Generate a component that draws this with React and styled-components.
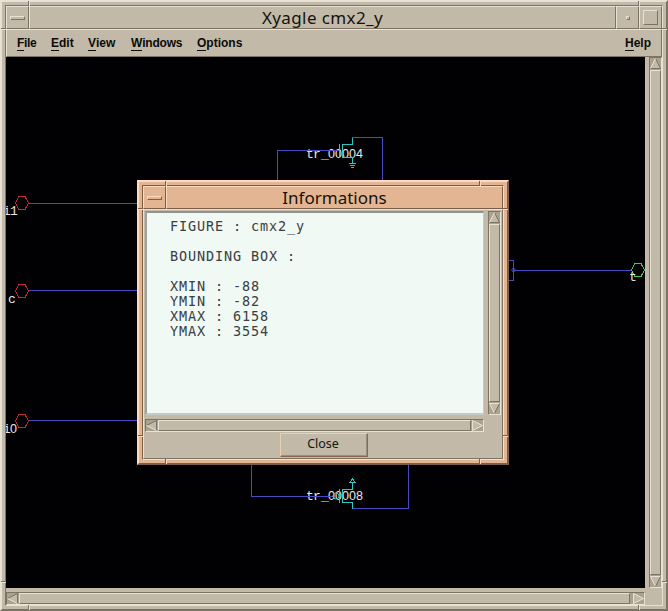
import React from "react";
import styled, { createGlobalStyle, css } from "styled-components";

const C = {
  base: "#c2b9a8", light: "#e8e2d6", dark: "#7b7464", trough: "#aaa18f",
  orange: "#e4b592", orangeLight: "#fbdcc2", orangeDark: "#7e5d48",
  wire: "#4a4ac0", cyan: "#32c3c3", red: "#c0263a", green: "#4ac84a",
};

const GlobalStyle = createGlobalStyle`
  * { box-sizing: border-box; }
  body { margin: 0; background: #000; overflow: hidden; }
`;

const tones = {
  beige: [C.base, C.light, C.dark],
  orange: [C.orange, C.orangeLight, C.orangeDark],
};

const raised = css`
  background: ${(p) => tones[p.$tone || "beige"][0]};
  border: 1px solid;
  border-color: ${(p) => {
    const [, l, d] = tones[p.$tone || "beige"];
    return `${l} ${d} ${d} ${l}`;
  }};
`;

const Frame = styled.div`
  ${raised}
  position: relative;
  border-width: 2px;
  padding: 3px;
  width: ${(p) => p.$w}px;
  height: ${(p) => p.$h}px;
`;

const Inner = styled.div`
  display: flex;
  flex-direction: column;
  height: 100%;
  border: 1px solid;
  border-color: ${(p) => {
    const [, l, d] = tones[p.$tone || "beige"];
    return `${d} ${l} ${l} ${d}`;
  }};
`;

const Handles = styled.svg`
  position: absolute;
  left: -2px;
  top: -2px;
  pointer-events: none;
`;

const TitleBar = styled.div`
  display: flex;
  flex: none;
  height: 23px;
`;

const TitleButton = styled.div`
  ${raised}
  width: 23px;
  display: flex;
  align-items: center;
  justify-content: center;
`;

const Glyph = styled.span`
  ${raised}
  width: ${(p) => p.$w}px;
  height: ${(p) => p.$h}px;
`;

const Title = styled.div`
  ${raised}
  flex: 1;
  text-align: center;
  font: 17px/21px "Noto Sans", "Open Sans", sans-serif;
  letter-spacing: ${(p) => p.$spacing || 0}px;
  color: #15120c;
  white-space: nowrap;
`;

const MenuBar = styled.div`
  ${raised}
  display: flex;
  flex: none;
  height: 28px;
  padding: 5px 10px 0 10px;
  font: bold 12px/16px "Liberation Sans", Arial, sans-serif;
  color: #0c0b08;
`;

const MenuItem = styled.div`
  width: ${(p) => p.$w}px;
  letter-spacing: ${(p) => p.$spacing || 0}px;
  white-space: nowrap;
  margin-left: ${(p) => (p.$end ? "auto" : "0")};
`;

const Mnemonic = styled.span`
  display: inline-block;
  height: 16px;
  border-bottom: 1px solid #0c0b08;
`;

const Body = styled.div`
  display: grid;
  grid-template-columns: 639px 13px;
  grid-template-rows: 531px 13px;
  gap: 4px;
  height: 548px;
  background: ${C.base};
`;

const Canvas = styled.svg`
  display: block;
  background: #010103;
`;

const ScrollBox = styled.div`
  display: flex;
  flex-direction: ${(p) => (p.$vertical ? "column" : "row")};
  width: ${(p) => (p.$vertical ? "13px" : "100%")};
  height: ${(p) => (p.$vertical ? "100%" : "13px")};
  background: ${C.trough};
  border: 1px solid;
  border-color: ${C.dark} ${C.light} ${C.light} ${C.dark};
`;

const Thumb = styled.div`
  ${raised}
  flex: 1;
  margin: ${(p) => (p.$vertical ? `1px 0 ${p.$rest}px` : `0 ${p.$rest}px 0 1px`)};
`;

const Arrow = styled.svg`
  display: block;
  flex: none;
  transform: rotate(${(p) => p.$turn}deg);
`;

const Desktop = styled.div`
  position: relative;
  width: 668px;
  height: 611px;
`;

const Dialog = styled.div`
  position: absolute;
  left: 137px;
  top: 180px;
`;

const DialogBody = styled.div`
  ${raised}
  flex: 1;
  padding: 1px 0 0 1px;
`;

const Panes = styled.div`
  display: grid;
  grid-template-columns: 339px 13px;
  grid-template-rows: 204px 13px;
  gap: 4px;
`;

const TextPane = styled.pre`
  margin: 0;
  padding: 6px 0 0 23px;
  background: #f0f9f4;
  border: solid;
  border-width: 2px 1px 2px 2px;
  border-color: #8f958e #c5cbc6 #c5cbc6 #9da29c;
  font: 13.5px/15px "DejaVu Sans Mono", monospace;
  letter-spacing: 0.873px;
  color: #3a4042;
`;

const CloseButton = styled.button`
  display: block;
  margin: 1px 0 0 135px;
  padding: 0 2px 2px 0;
  width: 88px;
  height: 24px;
  background: ${C.base};
  border: 1px solid;
  border-color: #efcdb2 #8a684f #8a684f #efcdb2;
  box-shadow: inset -1px -1px #988f7e;
  font: 12.5px/18px "Noto Sans", sans-serif;
  color: #17150f;
`;

function ArrowIcon({ turn }) {
  return (
    <Arrow width="11" height="11" viewBox="0 0 11 11" $turn={turn}>
      <path d="M5.5 0.5L10.5 10.5H0.5Z" fill={C.base} />
      <path d="M5.5 0.5L10.5 10.5H0.5" stroke={turn >= 90 && turn <= 180 ? C.light : C.dark} fill="none" />
      <path d="M5.5 0.5L0.5 10.5" stroke={turn === 180 ? C.dark : C.light} fill="none" />
    </Arrow>
  );
}

function ScrollBar({ vertical, rest = 1 }) {
  return (
    <ScrollBox $vertical={vertical}>
      <ArrowIcon turn={vertical ? 0 : 270} />
      <Thumb $vertical={vertical} $rest={rest} />
      <ArrowIcon turn={vertical ? 180 : 90} />
    </ScrollBox>
  );
}

function FrameHandles({ w, h, tone = "beige", right, low }) {
  const [, l, d] = tones[tone];
  const lines = (color, o) => (
    <path
      stroke={color}
      d={`M${28.5 + o} 1V6M${right + o + 0.5} 1V6M${28.5 + o} ${h - 6}V${h - 1}M${right + o + 0.5} ${h - 6}V${h - 1}
      M1 ${28.5 + o}H6M${w - 6} ${28.5 + o}H${w - 1}M1 ${low + o + 0.5}H6M${w - 6} ${low + o + 0.5}H${w - 1}`}
    />
  );
  return (
    <Handles width={w} height={h} shapeRendering="crispEdges">
      {lines(d, 0)}
      {lines(l, 1)}
    </Handles>
  );
}

const Label = styled.text`
  font: 13px "Liberation Mono", monospace;
  fill: #e6e6e6;
`;
const Digit = styled.tspan`
  font: 12.5px "Liberation Sans", sans-serif;
`;

function DeviceLabel({ y, last }) {
  return (
    <Label y={y}>
      <tspan x="306 313 321">tr_</tspan>
      <Digit x="328 335 342 349 356">{"0000" + last}</Digit>
    </Label>
  );
}

function Pin({ x, y, color }) {
  return (
    <path
      stroke={color}
      shapeRendering="crispEdges"
      d={`M${x - 6.5} ${y}L${x - 3} ${y - 6.5}H${x + 3}L${x + 6.5} ${y}L${x + 3} ${y + 6.5}H${x - 3}Z`}
    />
  );
}

function Schematic() {
  return (
    <Canvas width="639" height="531" viewBox="6 57 639 531" fill="none">
      <DeviceLabel y="158" last="4" />
      <DeviceLabel y="500" last="8" />
      <g stroke={C.wire} shapeRendering="crispEdges">
        <path d="M29 203.5H140M29 290.5H140M29 420.5H140" />
        <path d="M277.5 182V150.5H339M352 137.5H382.5V182" />
        <path d="M251.5 463V496.5H333M352 508.5H408.5V463" />
        <path d="M507 260.5H513.5V280.5H507M514 270.5H631" />
      </g>
      <circle cx="513.5" cy="270" r="1.7" stroke={C.wire} />
      <g stroke={C.cyan} shapeRendering="crispEdges">
        <path d="M339.5 144V158M352.5 138V144.5H342.5V157.5H352.5V163M349 163.5H356M350 165.5H355M351 167.5H354" />
        <path d="M339.5 489V503M352.5 483V489.5H342.5V502.5H352.5V509M349 482.5H356M349.5 482.5L352.5 479L355.5 482.5" />
      </g>
      <circle cx="336" cy="496" r="3" stroke={C.cyan} />
      <Pin x={22} y={203} color={C.red} />
      <Pin x={22} y={291} color={C.red} />
      <Pin x={22} y={421} color={C.red} />
      <Pin x={638} y={270} color={C.green} />
      <Label x="3" y="215">i<tspan x="10">1</tspan></Label>
      <Label x="8" y="303">c</Label>
      <Label x="3" y="433">i<Digit x="10">0</Digit></Label>
      <Label x="629" y="281">t</Label>
    </Canvas>
  );
}

const MENUS = [
  ["File", 34, -0.3], ["Edit", 37, 0], ["View", 43, 0], ["Windows", 66, -0.2], ["Options", 60, 0],
];

const INFO = `FIGURE : cmx2_y

BOUNDING BOX :

XMIN : -88
YMIN : -82
XMAX : 6158
YMAX : 3554`;

export default function App() {
  return (
    <Desktop>
      <GlobalStyle />
      <Frame $w={668} $h={611}>
        <Inner>
          <TitleBar>
            <TitleButton><Glyph $w={15} $h={4} /></TitleButton>
            <Title $spacing={0.4}>Xyagle cmx2_y</Title>
            <TitleButton><Glyph $w={4} $h={4} /></TitleButton>
            <TitleButton><Glyph $w={15} $h={15} /></TitleButton>
          </TitleBar>
          <MenuBar>
            {MENUS.map(([name, w, s]) => (
              <MenuItem key={name} $w={w} $spacing={s}>
                <Mnemonic>{name[0]}</Mnemonic>{name.slice(1)}
              </MenuItem>
            ))}
            <MenuItem $end><Mnemonic>H</Mnemonic>elp</MenuItem>
          </MenuBar>
          <Body>
            <Schematic />
            <ScrollBar vertical />
            <ScrollBar rest={3} />
          </Body>
        </Inner>
        <FrameHandles w={668} h={611} right={638} low={581} />
      </Frame>
      <Dialog>
        <Frame $tone="orange" $w={372} $h={285}>
          <Inner $tone="orange">
            <TitleBar>
              <TitleButton $tone="orange"><Glyph $tone="orange" $w={15} $h={4} /></TitleButton>
              <Title $tone="orange">Informations</Title>
            </TitleBar>
            <DialogBody>
              <Panes>
                <TextPane>{INFO}</TextPane>
                <ScrollBar vertical />
                <ScrollBar />
              </Panes>
              <CloseButton>Close</CloseButton>
            </DialogBody>
          </Inner>
          <FrameHandles w={372} h={285} tone="orange" right={342} low={255} />
        </Frame>
      </Dialog>
    </Desktop>
  );
}
